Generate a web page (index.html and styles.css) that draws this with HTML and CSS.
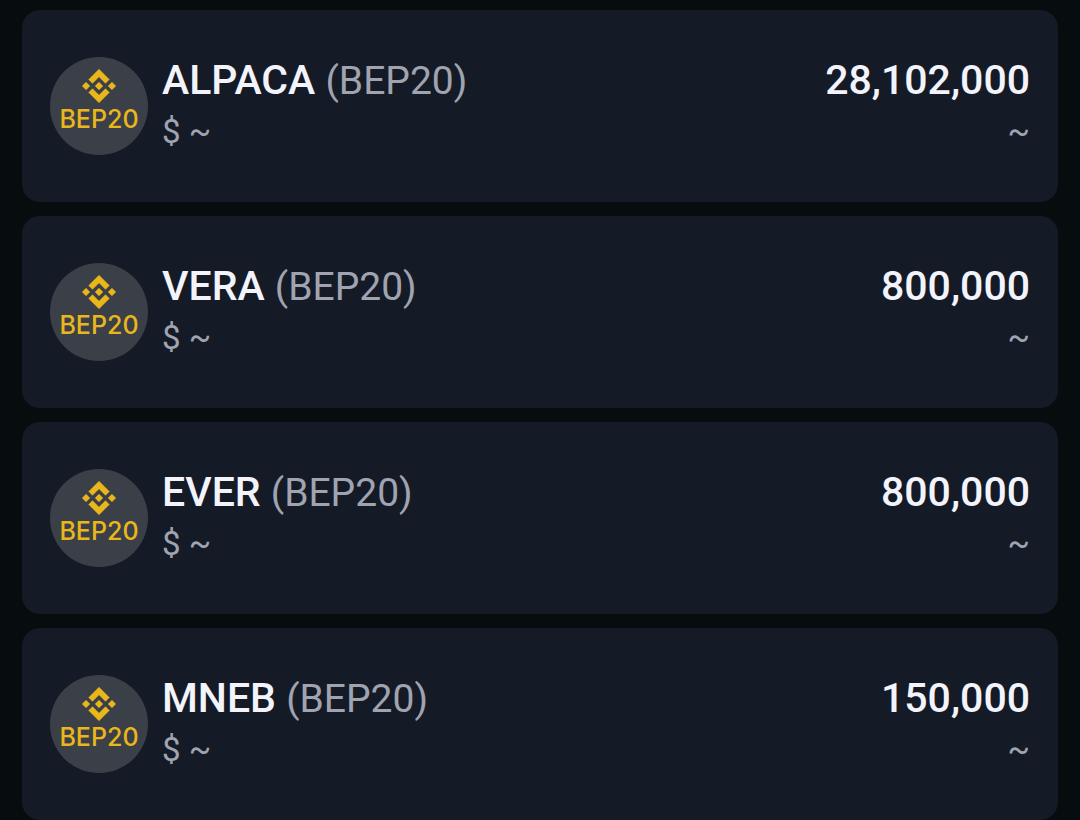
FILE: index.html
```
<!DOCTYPE html>
<html lang="en">
<head>
    <meta charset="utf-8">
    <meta name="viewport" content="width=device-width, initial-scale=1">
    <title>Wallet</title>
    <link rel="stylesheet" href="styles.css">
</head>
<body>

    <!-- logo shape, shared by every row -->
    <svg class="defs" aria-hidden="true">
        <symbol id="bnb" viewBox="-1 -1 128.6 128.6">
            <path d="M38.73 53.2l24.59-24.58 24.6 24.6 14.3-14.31L63.32 0l-38.9 38.9zM0 63.31l14.3-14.31 14.31 14.31-14.31 14.3zM38.73 73.41l24.59 24.59 24.6-24.6 14.31 14.29-38.9 38.91-38.91-38.88zM98 63.31l14.3-14.31 14.31 14.3-14.31 14.32zM77.83 63.3L63.32 48.78 48.79 63.31l14.53 14.5z"/>
        </symbol>
    </svg>

    <ul class="tokens">
        <li class="token">
            <div class="badge">
                <svg class="logo" aria-hidden="true"><use href="#bnb"/></svg>
                <span>BEP20</span>
            </div>
            <div class="info">
                <div class="name">ALPACA <span class="network">(BEP20)</span></div>
                <div class="sub">$ ~</div>
            </div>
            <div class="balance">
                <div class="amount">28,102,000</div>
                <div class="sub">~</div>
            </div>
        </li>
        <li class="token">
            <div class="badge">
                <svg class="logo" aria-hidden="true"><use href="#bnb"/></svg>
                <span>BEP20</span>
            </div>
            <div class="info">
                <div class="name">VERA <span class="network">(BEP20)</span></div>
                <div class="sub">$ ~</div>
            </div>
            <div class="balance">
                <div class="amount">800,000</div>
                <div class="sub">~</div>
            </div>
        </li>
        <li class="token">
            <div class="badge">
                <svg class="logo" aria-hidden="true"><use href="#bnb"/></svg>
                <span>BEP20</span>
            </div>
            <div class="info">
                <div class="name">EVER <span class="network">(BEP20)</span></div>
                <div class="sub">$ ~</div>
            </div>
            <div class="balance">
                <div class="amount">800,000</div>
                <div class="sub">~</div>
            </div>
        </li>
        <li class="token">
            <div class="badge">
                <svg class="logo" aria-hidden="true"><use href="#bnb"/></svg>
                <span>BEP20</span>
            </div>
            <div class="info">
                <div class="name">MNEB <span class="network">(BEP20)</span></div>
                <div class="sub">$ ~</div>
            </div>
            <div class="balance">
                <div class="amount">150,000</div>
                <div class="sub">~</div>
            </div>
        </li>
    </ul>

</body>
</html>
```

FILE: styles.css
```
* {
    box-sizing: border-box;
}
body {
    margin: 0;
    background-color: #070c0e;
    font-family: Roboto, "Liberation Sans", sans-serif;
    color: #f2f3fb;
}
.defs {
    display: block;
    width: 0;
    height: 0;
}
.tokens {
    display: flex;
    flex-direction: column;
    gap: 14px;
    margin: 0;
    padding: 10px 22px 0;
    list-style: none;
}
.token {
    display: flex;
    align-items: center;
    padding: 44px 28px;
    border-radius: 18px;
    background-color: #151b26;
}
.badge {
    display: flex;
    flex: none;
    flex-direction: column;
    align-items: center;
    width: 98px;
    height: 98px;
    margin-right: 14px;
    padding-top: 12px;
    border-radius: 50%;
    background-color: #3b3f48;
    color: #eab71b;
    font-family: Inter, sans-serif;
    font-size: 25px;
    font-weight: 500;
    line-height: 32px;
}
.logo {
    flex: none;
    width: 34px;
    height: 34px;
    fill: currentColor;
    stroke: currentColor;
    stroke-width: 2;
}
.info {
    flex: 1;
}
.name,
.amount {
    font-size: 41px;
    font-weight: 500;
    line-height: 52px;
}
.network {
    font-size: 39px;
    font-weight: 400;
    line-height: 1;
    color: #a0a4b1;
}
.sub {
    font-size: 33px;
    line-height: 52px;
    color: #a0a4b1;
}
.balance {
    text-align: right;
}
```
